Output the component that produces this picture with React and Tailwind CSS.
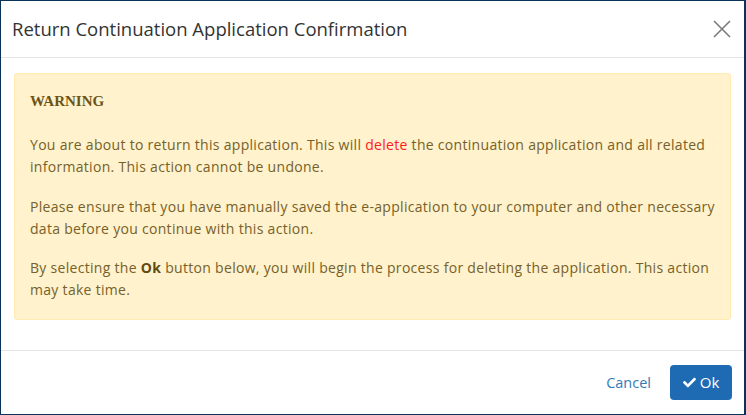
import React from "react";
import { FaCheck } from "react-icons/fa";

const App = () => {
  return (
    <div
      className="w-[746px] h-[415px] bg-white border border-[#0b3358] border-r-2 flex flex-col text-[#212529] overflow-hidden"
      style={{ fontFamily: '"Open Sans", "Noto Sans", sans-serif' }}
    >
      {/* Header */}
      <div className="h-[57px] shrink-0 flex items-center justify-between pl-[11px] pr-[12px] border-b border-[#e5e5e5]">
        <h4 className="text-[18.5px] text-[#333]">Return Continuation Application Confirmation</h4>
        <button className="text-[#7a7a7a] -mt-[1px]">
          <svg width="20" height="20" viewBox="0 0 20 20" fill="none" stroke="currentColor" strokeWidth="1.6">
            <path d="M2 2 L18 18 M18 2 L2 18" />
          </svg>
        </button>
      </div>

      {/* Body */}
      <div className="px-[13px] pt-[15px] pb-[30px] border-b border-[#e5e5e5]">
        <div className="bg-[#fff2cc] border border-[#ffeab0] rounded-[3px] pl-[15px] pr-[8px] pt-[17px] pb-[18px] text-[#76612a] text-[14px] tracking-[0.3px] leading-[22px]">
          <div
            className="font-bold text-[15px] tracking-normal leading-[20px] mb-[23px] text-[#6b5417]"
            style={{ fontFamily: '"Liberation Serif", "Times New Roman", serif' }}
          >
            WARNING
          </div>
          <p className="mb-[18px]">
            You are about to return this application. This will <span className="text-[#ff1a1a]">delete</span> the
            continuation application and all related information. This action cannot be undone.
          </p>
          <p className="mb-[17px]">
            Please ensure that you have manually saved the e-application to your computer and other necessary data
            before you continue with this action.
          </p>
          <p>
            By selecting the <b className="text-[#5f4a12]">Ok</b> button below, you will begin the process for deleting
            the application. This action may take time.
          </p>
        </div>
      </div>

      {/* Footer */}
      <div className="flex-1 flex items-center justify-end pr-[12px] gap-[19px]">
        <button className="text-[#337ab7] text-[14.5px]">Cancel</button>
        <button className="h-[35px] w-[62px] rounded-[4px] bg-[#1f6bb3] text-white text-[15px] flex items-center justify-center gap-[4px]">
          <FaCheck className="w-[13px] h-[13px]" />
          <span>Ok</span>
        </button>
      </div>
    </div>
  );
};

export default App;
